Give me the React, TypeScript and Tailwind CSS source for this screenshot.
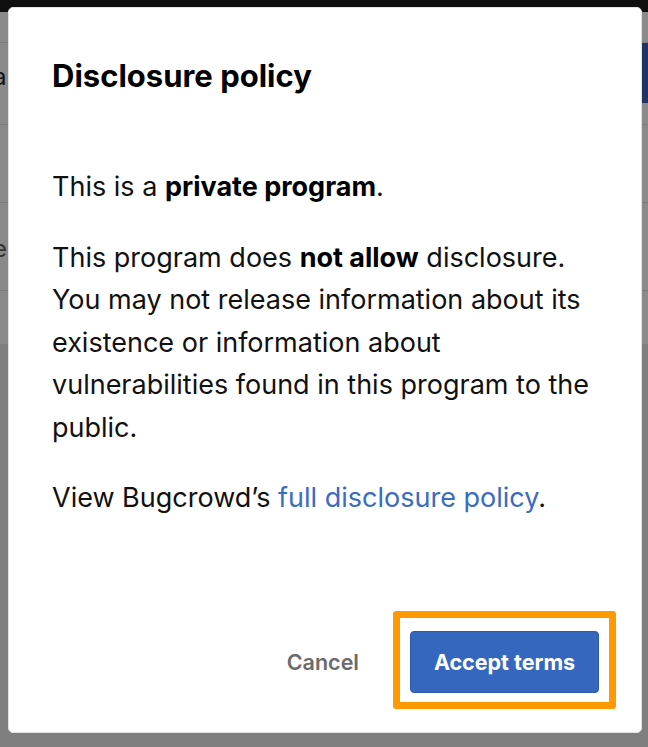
import React from 'react';

function PageBehind() {
  // the page under the modal, already dimmed by the overlay
  return (
    <div className="flex flex-col">
      <div className="h-[12px] bg-[#0f0f0f]" />
      <div className="bg-[#8a8a8a]">
        <div className="h-[31px] border-b border-[#7b7b7b]" />
        <div className="flex h-[82px] border-b border-[#7b7b7b]">
          <span className="-ml-[7px] pt-[16px] text-[24px] text-[#111]">a</span>
          <div className="ml-auto w-[120px] h-[60px] bg-[#1e3563]" />
        </div>
        <div className="h-[78px] border-b border-[#7b7b7b]" />
        <div className="flex h-[88px] border-b border-[#7b7b7b]">
          <span className="-ml-[7px] pt-[28px] text-[24px] text-[#333]">e</span>
        </div>
        <div className="h-[53px]" />
      </div>
    </div>
  );
}

export default function App() {
  return (
    <div className="relative w-[648px] h-[747px] overflow-hidden bg-[#7f7f7f] font-['Inter',sans-serif]">
      <PageBehind />

      <div className="absolute left-[8px] top-[7px] w-[634px] h-[726px] bg-white rounded-[5px] border border-[#e3e3e3] flex flex-col">
        <div className="pl-[43px] pt-[50px]">
          <h2 className="text-[31px] leading-[36px] font-bold text-black">Disclosure policy</h2>

          <div className="mt-[72px] w-[548px] flex flex-col gap-[28px] text-[27px] leading-[42.5px] text-[#111]">
            <p>
              This is a <strong className="font-bold text-black">private program</strong>.
            </p>
            <p>
              This program does <strong className="font-bold text-black">not allow</strong> disclosure. You may not
              release information about its existence or information about vulnerabilities found in this program to
              the public.
            </p>
            <p>
              View Bugcrowd’s <a className="text-[#3a6cc0]">full disclosure policy</a>.
            </p>
          </div>
        </div>

        <div className="mt-auto flex justify-end items-center pr-[25px] pb-[23px]">
          <button className="mr-[34px] pt-[4px] text-[21.5px] font-semibold text-[#6b6b6b]">Cancel</button>
          <div className="border-[7px] border-[#ff9900] rounded-[3px] pt-[13px] pb-[9px] px-[10px]">
            <button className="w-[189px] h-[62px] bg-[#3467bd] border border-[#2c5aa8] rounded-[4px] text-white text-[21.5px] font-bold">
              Accept terms
            </button>
          </div>
        </div>
      </div>
    </div>
  );
}
